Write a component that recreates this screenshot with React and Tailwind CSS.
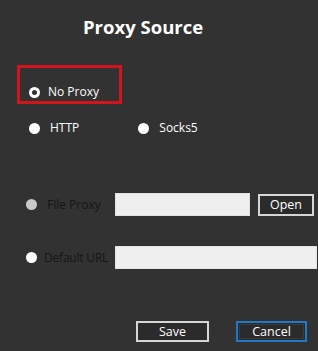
export default function App() {
  return (
    <div className="flex h-[351px] w-[318px] flex-col bg-[#323232] font-['Open_Sans',sans-serif] text-white">
      <h1 className="ml-[83px] mt-[14px] text-[18.5px] font-bold leading-[26px]">Proxy Source</h1>

      <div className="ml-[17px] mt-[25px] flex h-[39px] w-[105px] items-center border-[3px] border-[#d4141c] pl-[9px] pt-[15px]">
        <Radio ring />
        <span className="ml-[8px] text-[12px] leading-[18px]">No Proxy</span>
      </div>

      <div className="ml-[29px] mt-[15px] flex h-[18px] items-center text-[12px]">
        <Radio />
        <span className="ml-[10px]">HTTP</span>
        <div className="ml-[59px] flex items-center">
          <Radio />
          <span className="ml-[10px]">Socks5</span>
        </div>
      </div>

      <div className="ml-[26px] mt-[56px] flex items-center">
        <Radio muted />
        <span className="ml-[10px] w-[68px] shrink-0 whitespace-nowrap text-[12px] text-[#161616]">File Proxy</span>
        <div className="h-[23px] w-[135px] shrink-0 border border-[#e2e2e2] bg-[#efefef]" />
        <button className="ml-[8px] h-[22px] w-[56px] shrink-0 border-2 border-[#d6d6d6] bg-[#2b2b2b] text-[12.5px] leading-[17px] text-white">
          Open
        </button>
      </div>

      <div className="ml-[26px] mt-[30px] flex items-center">
        <Radio />
        <span className="ml-[7px] w-[71px] shrink-0 whitespace-nowrap text-[12px] tracking-[-0.2px] text-[#161616]">Default URL</span>
        <div className="h-[23px] w-[202px] shrink-0 border border-[#e2e2e2] bg-[#efefef]" />
      </div>

      <div className="ml-[136px] mt-[52px] flex gap-[27px]">
        <button className="h-[21px] w-[73px] border-2 border-[#d6d6d6] bg-[#2b2b2b] text-[12.5px] leading-[16px] text-white">
          Save
        </button>
        <button className="h-[21px] w-[71px] border-2 border-[#1f78c8] bg-[#2b2b2b] text-[12.5px] leading-[16px] text-white outline outline-1 -outline-offset-4 outline-[#3a3a3a]">
          Cancel
        </button>
      </div>
    </div>
  );
}

function Radio({ ring, muted }) {
  if (ring) {
    return (
      <span className="box-border block h-[11px] w-[11px] shrink-0 rounded-full border-[3px] border-white bg-[#323232]" />
    );
  }
  return (
    <span
      className={
        muted
          ? "block h-[11px] w-[11px] shrink-0 rounded-full bg-[#c9c9c9]"
          : "block h-[11px] w-[11px] shrink-0 rounded-full bg-white"
      }
    />
  );
}
